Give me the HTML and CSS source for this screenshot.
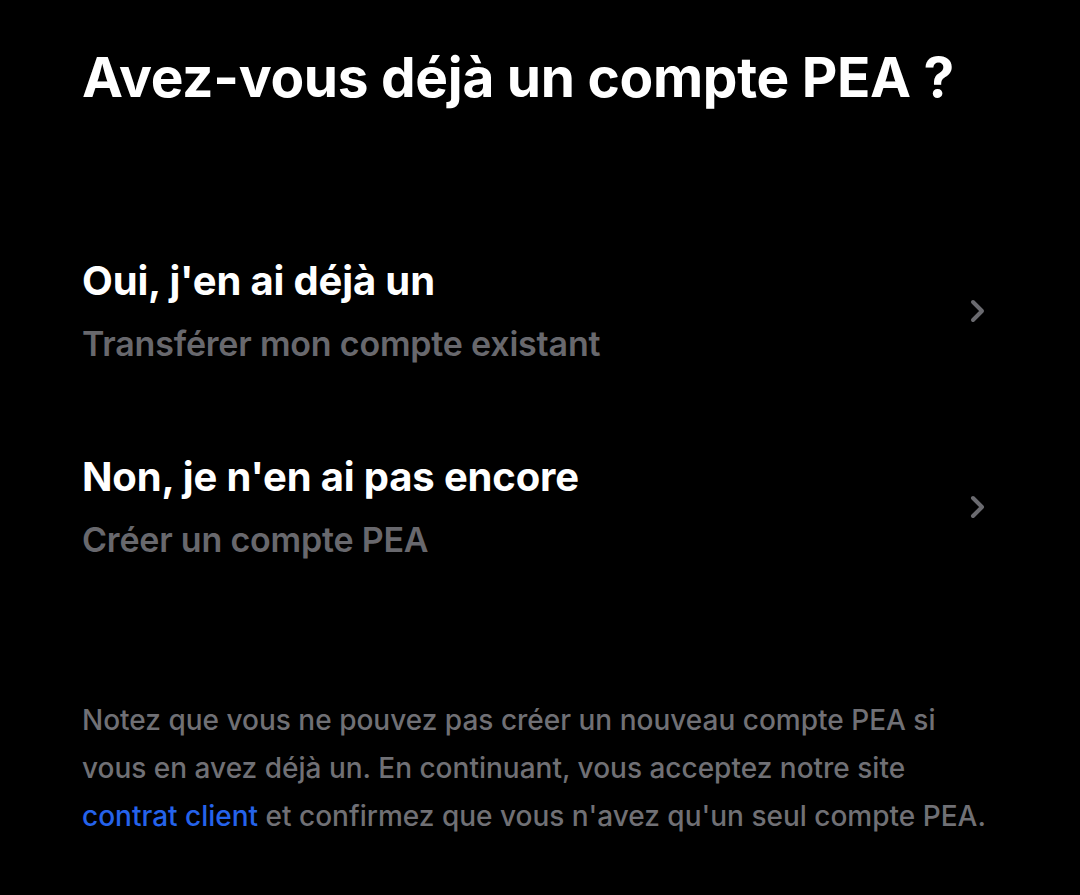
FILE: index.html
```html
<!DOCTYPE html>
<html lang="fr">
<head>
  <meta charset="UTF-8" />
  <title>Compte PEA</title>
  <link rel="stylesheet" href="styles.css">
</head>
<body>
  <main class="page">
    <h1 class="titre">Avez-vous déjà un compte PEA ?</h1>

    <div class="options">
      <a class="option" href="#">
        <div class="option-textes">
          <div class="option-titre">Oui, j'en ai déjà un</div>
          <div class="option-sous">Transférer mon compte existant</div>
        </div>
        <svg class="chevron" width="20" height="26" viewBox="0 0 20 26">
          <path d="M5 4 L14 13 L5 22" fill="none" stroke="#6a6a6f" stroke-width="4" stroke-linecap="round" stroke-linejoin="round"/>
        </svg>
      </a>

      <a class="option" href="#">
        <div class="option-textes">
          <div class="option-titre">Non, je n'en ai pas encore</div>
          <div class="option-sous">Créer un compte PEA</div>
        </div>
        <svg class="chevron" width="20" height="26" viewBox="0 0 20 26">
          <path d="M5 4 L14 13 L5 22" fill="none" stroke="#6a6a6f" stroke-width="4" stroke-linecap="round" stroke-linejoin="round"/>
        </svg>
      </a>
    </div>

    <p class="note">
      Notez que vous ne pouvez pas créer un nouveau compte PEA si<br>
      vous en avez déjà un. En continuant, vous acceptez notre site<br>
      <a href="#">contrat client</a> et confirmez que vous n'avez qu'un seul compte PEA.
    </p>
  </main>
</body>
</html>
```

FILE: styles.css
```css
body {
  margin: 0;
  background-color: #000;
  font-family: Inter, "Noto Sans", sans-serif;
  color: #fff;
}

.page {
  padding: 44px 82px 0 82px;
}

.titre {
  margin: 0;
  font-size: 55px;
  font-weight: 700;
  letter-spacing: -0.3px;
  line-height: 66px;
}

.options {
  margin-top: 147px;
  display: flex;
  flex-direction: column;
  gap: 88px;
}

.option {
  display: flex;
  align-items: center;
  justify-content: space-between;
  text-decoration: none;
  padding-right: 10px;
}

.option-textes {
  display: flex;
  flex-direction: column;
  gap: 18px;
}

.option-titre {
  color: #fff;
  font-size: 40px;
  font-weight: 700;
  line-height: 48px;
  letter-spacing: -0.15px;
}

.option-sous {
  color: #68686d;
  font-size: 34px;
  font-weight: 600;
  line-height: 42px;
  letter-spacing: -0.2px;
}

.note {
  margin: 135px 0 0 0;
  color: #707075;
  font-size: 28px;
  font-weight: 500;
  line-height: 48px;
  white-space: nowrap;
}

.note a {
  color: #2563eb;
  text-decoration: none;
}
```
